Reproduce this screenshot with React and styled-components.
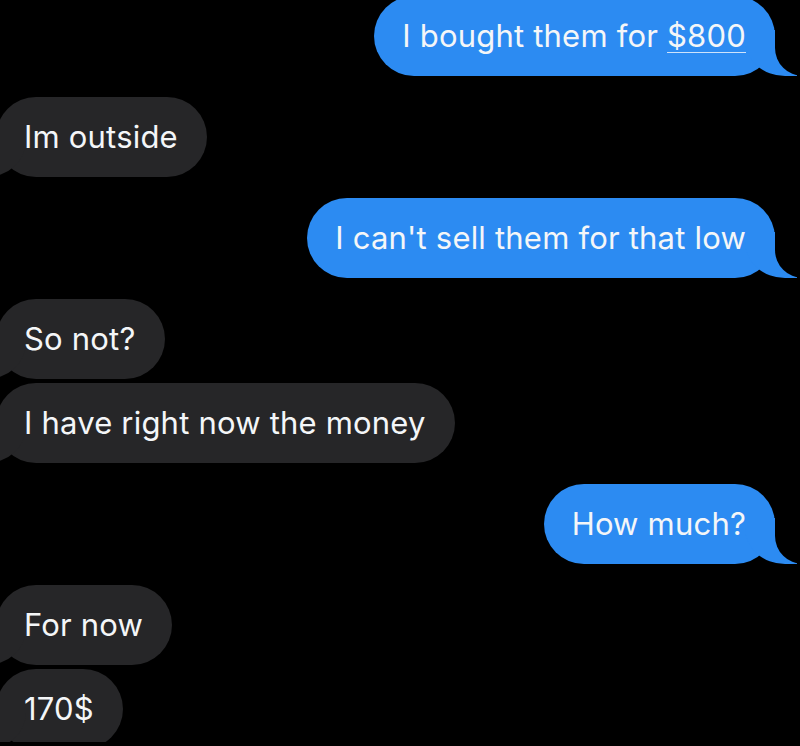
import React from "react";
import styled, { createGlobalStyle, css } from "styled-components";

const GlobalStyle = createGlobalStyle`
    html, body {
        margin: 0;
        padding: 0;
        background: #000;
        overflow: hidden;
    }
`;

const Thread = styled.div`
    width: 800px;
    height: 746px;
    overflow: hidden;
    background: #000;
    display: flex;
    flex-direction: column;
    padding: 0 25px 0 0;
    margin-top: -4px;
    box-sizing: border-box;
    font-family: Inter, "Liberation Sans", sans-serif;
`;

const Bubble = styled.div`
    position: relative;
    box-sizing: border-box;
    height: 80px;
    padding: 22px 29px 22px 28px;
    border-radius: 40px;
    font-size: 31px;
    letter-spacing: 0.2px;
    line-height: 36px;
    color: #f4f6f8;
    white-space: nowrap;
    margin-top: ${(p) => (p.$stack ? "4px" : "21px")};

    &::before,
    &::after {
        content: "";
        position: absolute;
        bottom: 0;
        height: 46px;
    }

    ${(p) =>
        p.$mine
            ? css`
                  align-self: flex-end;
                  background: #2c8bf2;
                  &::before {
                      right: -22px;
                      width: 52px;
                      background: #2c8bf2;
                      border-bottom-left-radius: 40px 36px;
                  }
                  &::after {
                      right: -64px;
                      width: 64px;
                      background: #000;
                      border-bottom-left-radius: 28px;
                  }
              `
            : css`
                  align-self: flex-start;
                  margin-left: -4px;
                  background: #262628;
                  &::before {
                      left: -22px;
                      width: 52px;
                      background: #262628;
                      border-bottom-right-radius: 40px 36px;
                  }
                  &::after {
                      left: -64px;
                      width: 64px;
                      background: #000;
                      border-bottom-right-radius: 28px;
                  }
              `}
    ${(p) => p.$first && "margin-top: 0;"}
`;

const Label = styled.span`
    position: relative;
    z-index: 1;
`;

const Link = styled.span`
    text-decoration: underline;
    text-decoration-thickness: 1px;
    text-underline-offset: 5px;
    text-decoration-color: #cfe3fb;
`;

const messages = [
    { mine: true, text: <>I bought them for <Link>$800</Link></> },
    { mine: false, text: "Im outside" },
    { mine: true, text: "I can't sell them for that low" },
    { mine: false, text: "So not?" },
    { mine: false, text: "I have right now the money", stack: true },
    { mine: true, text: "How much?" },
    { mine: false, text: "For now" },
    { mine: false, text: "170$", stack: true },
];

function App() {
    return (
        <>
            <GlobalStyle />
            <Thread>
                {messages.map((m, i) => (
                    <Bubble key={i} $mine={m.mine} $stack={m.stack} $first={i === 0}>
                        <Label>{m.text}</Label>
                    </Bubble>
                ))}
            </Thread>
        </>
    );
}

export default App;
